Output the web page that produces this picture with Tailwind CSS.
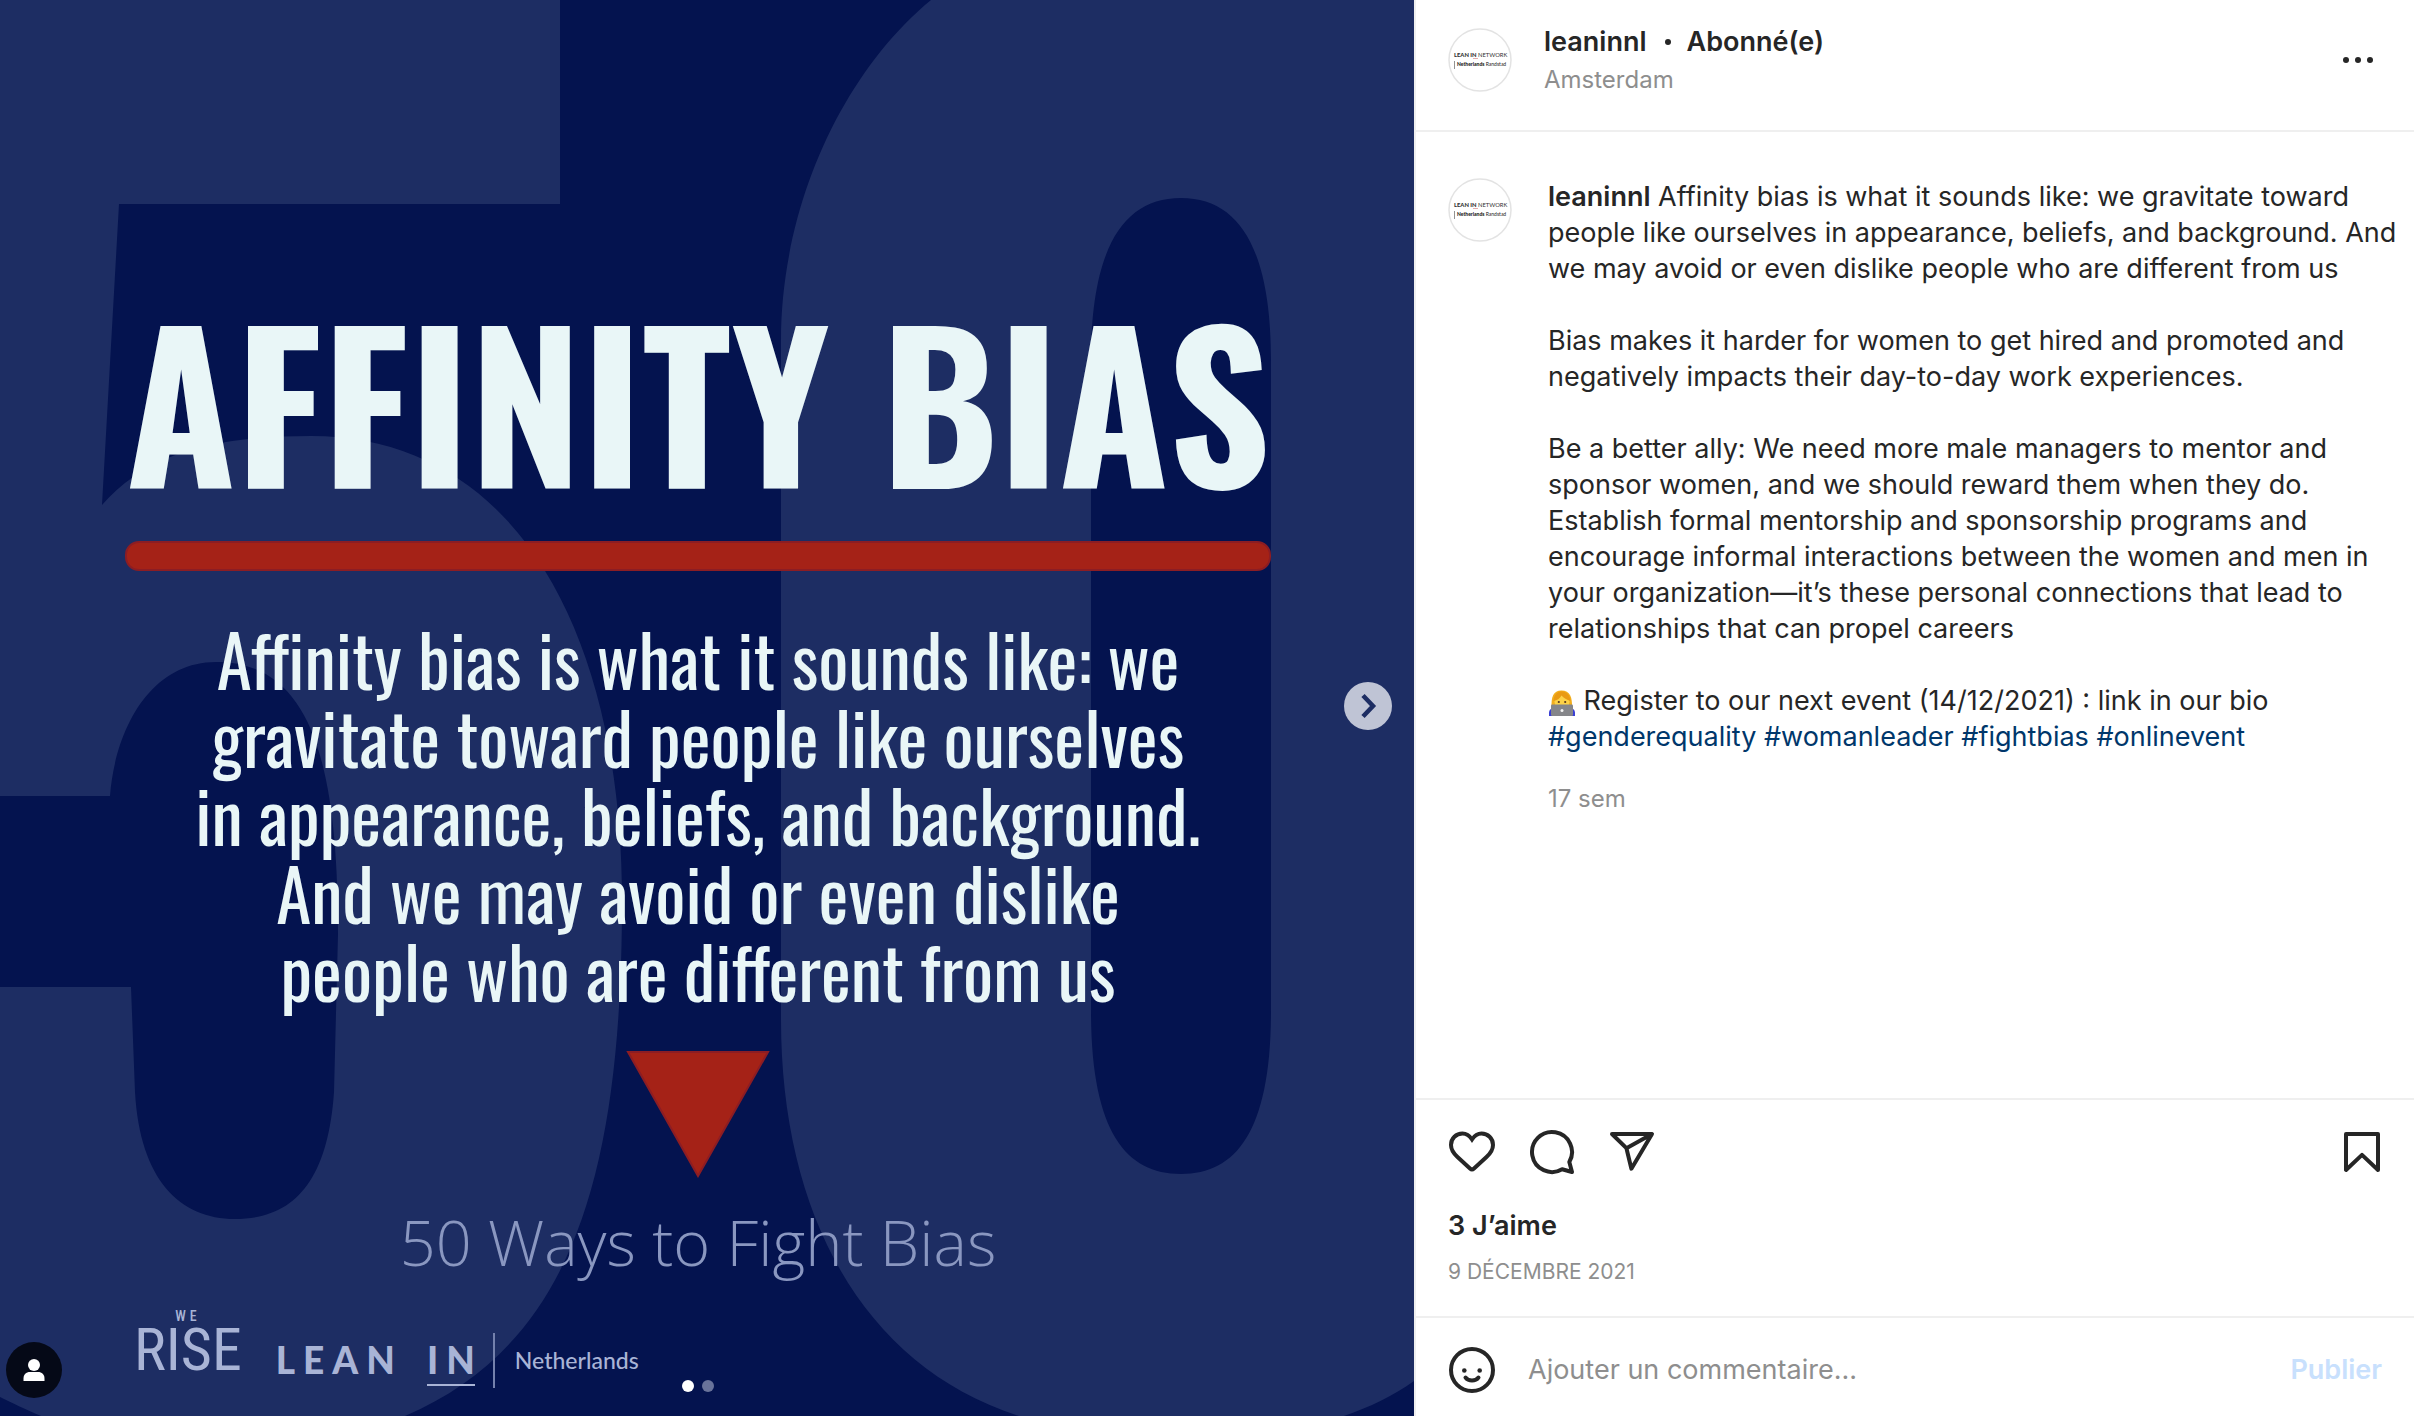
<!DOCTYPE html>
<html lang="fr">
<head>
<meta charset="utf-8">
<meta name="viewport" content="width=device-width, initial-scale=1">
<title>leaninnl</title>
<script src="https://cdn.jsdelivr.net/npm/@tailwindcss/browser@4"></script>
</head>
<body class="bg-white font-[Inter,sans-serif] text-[27px] leading-[36px] text-[#262626]">

<svg class="hidden" aria-hidden="true">
  <symbol id="avatar" viewBox="0 0 64 64">
    <circle cx="32" cy="32" r="31" fill="#fff" stroke="#e3e3e3" stroke-width="1.5"/>
    <text x="6" y="29" font-family="Lato, sans-serif" font-size="5.8" fill="#333"><tspan font-weight="900">LEAN IN</tspan> NETWORK</text>
    <path d="M25 30.500h5" stroke="#d99" stroke-width=".8"/>
    <path d="M6.500 33v8" stroke="#777" stroke-width=".8"/>
    <text x="9" y="37.500" font-family="Lato, sans-serif" font-size="5" fill="#222"><tspan font-weight="900">Netherlands</tspan> Randstad</text>
  </symbol>
</svg>

<main class="grid min-h-screen grid-cols-[1414fr_1000fr]">

  <!-- Post picture -->
  <section class="relative overflow-hidden bg-[#04134f]">
    <svg class="absolute inset-0 h-full w-full" viewBox="0 0 1414 1416" preserveAspectRatio="xMidYMid slice" aria-hidden="true">
      <g fill="#1d2d63">
        <path d="M0 0H560V204H119L102 505C150 450 220 436 311 436C520 436 622 640 622 900C622 1180 570 1345 405 1416H41C25 1409 12 1403 0 1397V987H131L135 1092C140 1180 180 1219 235 1219C295 1219 328 1180 334 1092L338 934C338 760 310 662 216 662C150 662 115 730 110 796H0Z"/>
        <path fill-rule="evenodd" d="M931 0H1414V1381C1393 1396 1370 1407 1344 1416H1019C860 1365 781 1210 781 1020V340C781 210 840 75 931 0ZM1091 361V1010C1091 1130 1125 1174 1181 1174C1237 1174 1271 1130 1271 1010V361C1271 250 1240 198 1181 198C1122 198 1091 250 1091 361Z"/>
      </g>
    </svg>

    <div class="relative flex flex-col items-center pr-[18px] pt-[299px] text-center text-[#e9f6f7] [font-variant-ligatures:none]">
      <h1 class="whitespace-nowrap font-[Oswald,'Roboto_Condensed',sans-serif] text-[200px] font-bold leading-[200px]">AFFINITY BIAS</h1>
      <div class="mt-[42px] h-[30px] w-[1146px] rounded-[14px] border-2 border-[#8c1d24] bg-[#a52217]"></div>
      <p class="mt-[48px] whitespace-nowrap font-[Oswald,'Roboto_Condensed',sans-serif] text-[71px] leading-[78px]">Affinity bias is what it sounds like: we<br>gravitate toward people like ourselves<br>in appearance, beliefs, and background.<br>And we may avoid or even dislike<br>people who are different from us</p>
      <svg class="mt-[42px] h-[127px] w-[144px]" viewBox="0 0 144 127" aria-hidden="true"><path d="M2 1H142L72 125Z" fill="#a52217" stroke="#8c1d24" stroke-width="2"/></svg>
      <p class="mt-[22px] font-['Open_Sans',sans-serif] text-[63px] font-light leading-[84px] text-[#8a97c0]">50 Ways to Fight Bias</p>
    </div>

    <div class="relative mt-[24px] flex items-start pl-[134px] text-[#a9b4d6]">
      <div class="flex flex-col items-center font-['Roboto_Condensed',Roboto,sans-serif]">
        <span class="text-[14px] font-medium leading-[16px] tracking-[4px]">WE</span>
        <span class="mt-[2px] text-[60px] leading-[48px]">RISE</span>
      </div>
      <p class="ml-[34px] mt-[28px] flex gap-[24px] font-[Lato,sans-serif] text-[37px] font-black leading-[48px] tracking-[8px]"><span>LEAN</span> <span class="border-b-2 border-[#a9b4d6]">I<span class="tracking-normal">N</span></span></p>
      <div class="ml-[18px] mt-[25px] h-[55px] w-[2px] bg-[#7481ad]"></div>
      <p class="ml-[20px] mt-[36px] font-[Lato,sans-serif] text-[23px] font-medium leading-[32px]">Netherlands</p>
    </div>

    <button type="button" aria-label="Suivant" class="absolute inset-y-0 right-[22px] mb-1 flex items-center">
      <svg class="h-12 w-12" viewBox="0 0 48 48" fill="none" stroke="#1d2d63" stroke-width="4.500" aria-hidden="true"><circle cx="24" cy="24" r="24" fill="#bfc4d5" stroke="none"/><path d="M19 13.500L29 24L19 34.500"/></svg>
    </button>
    <div class="absolute inset-x-0 bottom-[24px] flex justify-center gap-2 pr-[18px]">
      <span class="h-3 w-3 rounded-full bg-white"></span>
      <span class="h-3 w-3 rounded-full bg-[#69739a]"></span>
    </div>
    <button type="button" aria-label="Personnes identifiées" class="absolute bottom-[18px] left-[6px] h-14 w-14 rounded-full bg-[#050917]">
      <svg class="h-14 w-14" viewBox="0 0 56 56" fill="#fff" aria-hidden="true"><circle cx="28" cy="23" r="6"/><path d="M17.500 39v-2.500c0-4 2.600-6.500 6.500-6.500h8c3.900 0 6.500 2.500 6.500 6.500V39z"/></svg>
    </button>
  </section>

  <!-- Post details -->
  <article class="flex flex-col border-l-2 border-[#efefef]">
    <header class="flex items-center border-b-2 border-[#efefef] pb-[34px] pl-8 pr-8 pt-6">
      <svg class="h-16 w-16 shrink-0" aria-hidden="true"><use href="#avatar"/></svg>
      <div class="ml-8">
        <div class="flex items-center font-semibold">
          <a href="#leaninnl">leaninnl</a>
          <span class="ml-[18px] mr-4 h-[6px] w-[6px] rounded-full bg-[#262626]"></span>
          <button type="button">Abonné(e)</button>
        </div>
        <a href="#amsterdam" class="mt-1 block text-[24px] leading-[32px] text-[#8e8e8e]">Amsterdam</a>
      </div>
      <button type="button" aria-label="Plus d’options" class="ml-auto">
        <svg class="h-12 w-12" viewBox="0 0 48 48" fill="#262626" aria-hidden="true"><circle cx="12" cy="24" r="3"/><circle cx="24" cy="24" r="3"/><circle cx="36" cy="24" r="3"/></svg>
      </button>
    </header>

    <div class="flex flex-1 items-start pb-8 pl-8 pr-2 pt-[46px]">
      <svg class="h-16 w-16 shrink-0" aria-hidden="true"><use href="#avatar"/></svg>
      <div class="ml-9 pt-px">
        <p><a href="#leaninnl" class="font-semibold">leaninnl</a> Affinity bias is what it sounds like: we gravitate toward people like ourselves in appearance, beliefs, and background. And we may avoid or even dislike people who are different from us</p>
        <p class="mt-9">Bias makes it harder for women to get hired and promoted and negatively impacts their day-to-day work experiences.</p>
        <p class="mt-9">Be a better ally: We need more male managers to mentor and sponsor women, and we should reward them when they do. Establish formal mentorship and sponsorship programs and encourage informal interactions between the women and men in your organization—it’s these personal connections that lead to relationships that can propel careers</p>
        <p class="mt-9"><svg class="inline-block h-7 w-7 align-text-bottom" viewBox="0 0 28 28" role="img" aria-label="Femme devant un ordinateur">
            <path d="M3.500 20C3 8 5 1.500 13.500 1.500S24.500 8 24 20z" fill="#f2ae1c"/>
            <path d="M1 27v-3c0-3 2-5 5-5h16c3 0 5 2 5 5v3z" fill="#3a3fd4"/>
            <ellipse cx="14" cy="12.500" rx="7.500" ry="8" fill="#fdd247"/>
            <path d="M5.500 12C6 5 9.500 2.500 14 2.500S22 6 22.500 12C19 11 15.500 9 13.500 6.500C12 9.500 9 11.500 5.500 12z" fill="#e99a13"/>
            <circle cx="10.800" cy="13" r="1.100" fill="#54351a"/><circle cx="17.200" cy="13" r="1.100" fill="#54351a"/>
            <rect x="3" y="15.500" width="22" height="11.500" rx="1.200" fill="#85868a"/>
            <circle cx="14" cy="21.500" r="1.500" fill="#f2f2f2"/>
          </svg> Register to our next event (14/12/2021) : link in our bio<br>
          <a href="#genderequality" class="text-[#00376b]">#genderequality</a> <a href="#womanleader" class="text-[#00376b]">#womanleader</a> <a href="#fightbias" class="text-[#00376b]">#fightbias</a> <a href="#onlinevent" class="text-[#00376b]">#onlinevent</a></p>
        <time class="mt-7 block text-[24px] leading-[32px] text-[#8e8e8e]">17 sem</time>
      </div>
    </div>

    <div class="border-t-2 border-[#efefef] pb-8 pl-8 pr-7 pt-7">
      <div class="flex gap-8">
        <button type="button" aria-label="J’aime">
          <svg class="h-12 w-12" viewBox="0 0 48 48" fill="none" stroke="#262626" stroke-width="4" aria-hidden="true"><path d="M24 11.500C22 8.500 19 5.600 14.500 5.600C8.200 5.600 3 10.300 3 17C3 22.500 6 25.800 9.500 29L22 40.500Q24 42.300 26 40.500L38.500 29C42 25.800 45 22.500 45 17C45 10.300 39.800 5.600 33.500 5.600C29 5.600 26 8.500 24 11.500Z"/></svg>
        </button>
        <button type="button" aria-label="Commenter">
          <svg class="h-12 w-12" viewBox="0 0 24 24" fill="none" stroke="#262626" stroke-width="2" aria-hidden="true"><path d="M20.656 17.008a9.993 9.993 0 1 0-3.590 3.615L22 22Z" stroke-linejoin="round"/></svg>
        </button>
        <button type="button" aria-label="Partager">
          <svg class="h-12 w-12" viewBox="0 0 24 24" fill="none" stroke="#262626" stroke-width="2" stroke-linejoin="round" aria-hidden="true"><path d="M22 3L9.218 10.083M11.698 20.334L22 3H2L9.218 10.084Z"/></svg>
        </button>
        <button type="button" aria-label="Enregistrer" class="ml-auto">
          <svg class="h-12 w-12" viewBox="0 0 24 24" fill="none" stroke="#262626" stroke-width="2" stroke-linejoin="round" aria-hidden="true"><path d="M20 21L12 13.440L4 21V3H20Z"/></svg>
        </button>
      </div>
      <p class="mt-8 font-semibold">3 J’aime</p>
      <time datetime="2021-12-09" class="mt-4 block text-[21px] leading-[24px] text-[#8e8e8e]">9 DÉCEMBRE 2021</time>
    </div>

    <form class="flex items-center border-t-2 border-[#efefef] pb-[22px] pl-8 pr-8 pt-7">
      <button type="button" aria-label="Emoji" class="shrink-0">
        <svg class="h-12 w-12" viewBox="0 0 48 48" fill="none" stroke="#262626" stroke-width="4" stroke-linecap="round" aria-hidden="true"><circle cx="24" cy="24" r="21"/><path d="M17.500 31.500C20.500 35.500 27.500 35.500 30.500 31.500"/><circle cx="16.300" cy="24.500" r="2.300" fill="#262626" stroke="none"/><circle cx="31.700" cy="24.500" r="2.300" fill="#262626" stroke="none"/></svg>
      </button>
      <input type="text" aria-label="Ajouter un commentaire" placeholder="Ajouter un commentaire..." class="ml-8 min-w-0 flex-1 outline-none placeholder:text-[#8e8e8e]">
      <button type="submit" class="font-semibold text-[#c8e0fd]">Publier</button>
    </form>
  </article>
</main>
</body>
</html>
